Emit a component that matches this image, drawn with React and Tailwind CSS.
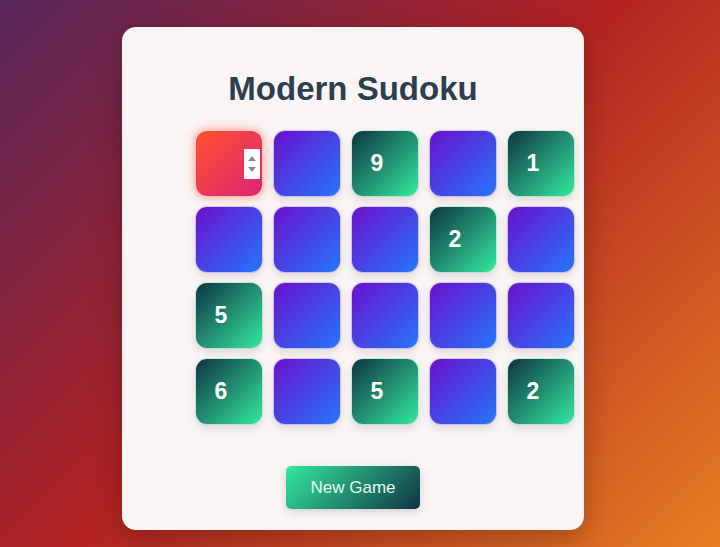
import React from "react";

const board = [
  [null, null, 9, null, 1],
  [null, null, null, 2, null],
  [5, null, null, null, null],
  [6, null, 5, null, 2],
];

const Spinner = () => (
  <div className="absolute right-[2px] top-1/2 -translate-y-1/2 w-[16px] h-[30px] bg-white flex flex-col items-center justify-center gap-[6px] rounded-[1px]">
    <svg width="8" height="5" viewBox="0 0 8 5">
      <path d="M0 5 L4 0 L8 5 Z" fill="#8a8a8a" />
    </svg>
    <svg width="8" height="5" viewBox="0 0 8 5">
      <path d="M0 0 L4 5 L8 0 Z" fill="#8a8a8a" />
    </svg>
  </div>
);

const Cell = ({ value, active }) => {
  let look =
    "bg-[linear-gradient(135deg,#6a11cb,#2575fc)] shadow-[0_0_0_1px_rgba(140,120,255,0.35),0_4px_10px_rgba(0,0,0,0.12)]";
  if (value !== null)
    look =
      "bg-[linear-gradient(135deg,#0f3443,#34e89e)] shadow-[0_0_0_1px_rgba(52,232,158,0.25),0_4px_10px_rgba(0,0,0,0.12)]";
  if (active)
    look =
      "bg-[linear-gradient(135deg,#ff512f,#dd2476)] shadow-[0_0_8px_2px_rgba(255,81,47,0.45)]";

  return (
    <div
      className={`relative w-[66px] h-[65px] rounded-[11px] flex items-center justify-center pr-[16px] text-white font-bold text-[23px] ${look}`}
    >
      {value}
      {active && <Spinner />}
    </div>
  );
};

export default function App() {
  return (
    <div className="min-h-[547px] w-full bg-[linear-gradient(135deg,#56265a_0%,#b22222_48%,#e67e22_100%)] flex justify-center pt-[27px] pr-[14px] font-['Liberation_Sans',Arial,sans-serif]">
      <div className="w-[462px] h-[503px] rounded-[14px] bg-[#faf4f4] shadow-[0_10px_30px_rgba(0,0,0,0.25)] flex flex-col items-center pt-[42px]">
        <h1 className="text-[33px] leading-[40px] font-bold text-[#2c3e50]">
          Modern Sudoku
        </h1>

        <div className="self-start pl-[74px] mt-[22px] flex flex-col gap-[11px]">
          {board.map((row, r) => (
            <div key={r} className="flex gap-[12px]">
              {row.map((v, c) => (
                <Cell key={c} value={v} active={r === 0 && c === 0} />
              ))}
            </div>
          ))}
        </div>

        <button className="mt-[42px] w-[134px] h-[43px] rounded-[5px] bg-[linear-gradient(135deg,#34e89e,#0f3443)] text-[#e4fbef] text-[17px] shadow-[0_3px_8px_rgba(0,0,0,0.15)]">
          New Game
        </button>
      </div>
    </div>
  );
}
